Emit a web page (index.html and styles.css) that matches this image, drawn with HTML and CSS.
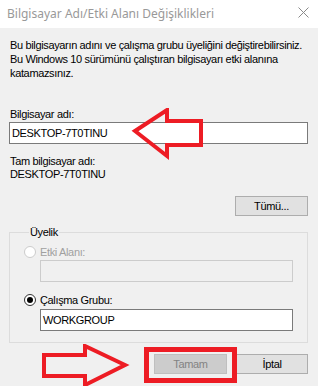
FILE: index.html
```html
<!DOCTYPE html>
<html lang="tr">
<head>
  <meta charset="UTF-8" />
  <meta name="viewport" content="width=device-width, initial-scale=1.0" />
  <title>Bilgisayar Adı/Etki Alanı Değişiklikleri</title>
  <link rel="stylesheet" href="styles.css">
</head>
<body>

  <div class="window">
    <div class="titlebar">
      <span class="title">Bilgisayar Adı/Etki Alanı Değişiklikleri</span>
      <svg class="close" width="11" height="11" viewBox="0 0 11 11">
        <path d="M0.5 0.5 L10.5 10.5 M10.5 0.5 L0.5 10.5" stroke="#8a8a8a" stroke-width="1" fill="none" />
      </svg>
    </div>

    <div class="content">
      <p class="intro">
        Bu bilgisayarın adını ve çalışma grubu üyeliğini değiştirebilirsiniz.<br>
        Bu Windows 10 sürümünü çalıştıran bilgisayarı etki alanına<br>
        katamazsınız.
      </p>

      <div class="label name-label">Bilgisayar adı:</div>
      <div class="textbox wide">DESKTOP-7T0TINU</div>

      <div class="label full-label">Tam bilgisayar adı:</div>
      <div class="label full-value">DESKTOP-7T0TINU</div>

      <div class="more-row">
        <button class="btn">Tümü...</button>
      </div>

      <fieldset class="group">
        <legend>Üyelik</legend>
        <div class="radio-row disabled">
          <span class="radio"></span>
          <span>Etki Alanı:</span>
        </div>
        <div class="textbox inner disabled"></div>

        <div class="radio-row second">
          <span class="radio checked"></span>
          <span>Çalışma Grubu:</span>
        </div>
        <div class="textbox inner">WORKGROUP</div>
      </fieldset>

      <div class="actions">
        <button class="btn disabled">Tamam</button>
        <button class="btn">İptal</button>
      </div>
    </div>

    <!-- red markers drawn on top of the dialog -->
    <svg class="arrow arrow-left" width="80" height="56" viewBox="0 0 80 56">
      <polygon points="4,23 36,2 36,13 70,13 70,37 36,37 36,48" fill="none" stroke="#ed1c24" stroke-width="4" stroke-linejoin="miter" />
    </svg>
    <svg class="arrow arrow-right" width="90" height="44" viewBox="0 0 90 44">
      <polygon points="2,11 43,11 43,2 83,21 43,41 43,32 2,32" fill="none" stroke="#ed1c24" stroke-width="4" stroke-linejoin="miter" />
    </svg>
    <div class="highlight"></div>
  </div>

</body>
</html>
```

FILE: styles.css
```css
body {
  margin: 0;
  background: #f0f0f0;
  font-family: "Liberation Sans", Arial, sans-serif;
  font-size: 11px;
  letter-spacing: -0.35px;
  color: #000;
  overflow: hidden;
}

.window {
  position: relative;
  width: 318px;
  height: 386px;
}

.titlebar {
  height: 28px;
  background: #fff;
  display: flex;
  align-items: center;
  justify-content: space-between;
  padding: 0 9px 0 7px;
}

.title {
  font-family: "Noto Sans", "Liberation Sans", sans-serif;
  font-size: 12px;
  letter-spacing: 0;
  color: #999;
  margin-top: -2px;
}

.close {
  margin-top: -3px;
}

.content {
  padding: 10px 10px 0 9px;
}

.intro {
  margin: 0 0 0 1px;
  line-height: 14px;
  white-space: nowrap;
}

.label {
  line-height: 14px;
  padding-left: 1px;
  white-space: nowrap;
}

.name-label {
  margin-top: 27px;
}

.full-label {
  margin-top: 10px;
}

.full-value {
  margin-top: -1px;
}

.textbox {
  box-sizing: border-box;
  height: 22px;
  border: 1px solid #7a7a7a;
  background: #fff;
  padding: 3px 2px 0;
  line-height: 14px;
}

.textbox.wide {
  width: 299px;
  margin-top: 1px;
}

.more-row {
  display: flex;
  justify-content: flex-end;
  margin-top: 15px;
}

.btn {
  box-sizing: border-box;
  width: 73px;
  height: 20px;
  padding: 0;
  border: 1px solid #adadad;
  background: #e1e1e1;
  font-family: "Liberation Sans", Arial, sans-serif;
  font-size: 11px;
  letter-spacing: -0.35px;
  color: #000;
}

.btn.disabled {
  background: #cccccc;
  border-color: #bfbfbf;
  color: #838383;
}

.group {
  box-sizing: border-box;
  width: 299px;
  margin: 9px 0 0;
  padding: 6px 14px 11px 14px;
  border: 1px solid #dcdcdc;
}

.group legend {
  padding: 0 1px;
  margin-left: 5px;
  line-height: 14px;
}

.radio-row {
  display: flex;
  align-items: center;
  gap: 4px;
  line-height: 14px;
}

.radio-row.disabled {
  color: #a0a0a0;
}

.radio-row.second {
  margin-top: 11px;
}

.radio {
  box-sizing: border-box;
  width: 12px;
  height: 12px;
  border-radius: 50%;
  border: 1px solid #333;
  background: #fff;
  position: relative;
}

.radio-row.disabled .radio {
  border-color: #cccccc;
}

.radio.checked::after {
  content: "";
  position: absolute;
  left: 2px;
  top: 2px;
  width: 6px;
  height: 6px;
  border-radius: 50%;
  background: #000;
}

.textbox.inner {
  width: 253px;
  margin-left: 16px;
  margin-top: 1px;
}

.radio-row.second + .textbox.inner {
  margin-top: 2px;
}

.textbox.disabled {
  background: #f0f0f0;
  border-color: #cccccc;
}

.actions {
  display: flex;
  justify-content: flex-end;
  gap: 9px;
  margin-top: 11px;
}

.actions .btn:last-child {
  width: 72px;
}

.arrow {
  position: absolute;
}

.arrow-left {
  left: 131px;
  top: 108px;
}

.arrow-right {
  left: 42px;
  top: 344px;
}

.highlight {
  position: absolute;
  left: 144px;
  top: 347px;
  width: 83px;
  height: 26px;
  border: 5px solid #ed1c24;
}
```
